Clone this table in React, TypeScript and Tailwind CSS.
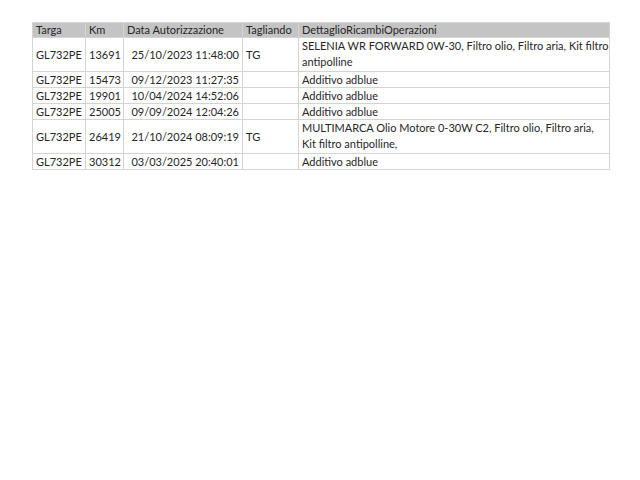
const rows = [
  { targa: "GL732PE", km: "13691", data: "25/10/2023 11:48:00", tg: "TG", det: ["SELENIA WR FORWARD 0W-30, Filtro olio, Filtro aria, Kit filtro", "antipolline"] },
  { targa: "GL732PE", km: "15473", data: "09/12/2023 11:27:35", tg: "", det: ["Additivo adblue"] },
  { targa: "GL732PE", km: "19901", data: "10/04/2024 14:52:06", tg: "", det: ["Additivo adblue"] },
  { targa: "GL732PE", km: "25005", data: "09/09/2024 12:04:26", tg: "", det: ["Additivo adblue"] },
  { targa: "GL732PE", km: "26419", data: "21/10/2024 08:09:19", tg: "TG", det: ["MULTIMARCA Olio Motore 0-30W C2, Filtro olio, Filtro aria,", "Kit filtro antipolline,"] },
  { targa: "GL732PE", km: "30312", data: "03/03/2025 20:40:01", tg: "", det: ["Additivo adblue"] },
];

const cell = "border border-[#d4d4d4] px-[3px] py-0 align-middle whitespace-nowrap";

export default function App() {
  return (
    <div className="w-[640px] h-[480px] bg-white pt-[22px] pl-[32px] text-[#262626] text-[11px]" style={{ fontFamily: "Lato, 'Open Sans', sans-serif" }}>
      <table className="border-collapse table-fixed w-[577px] border border-[#cfcfcf]">
        <colgroup>
          <col className="w-[53px]" />
          <col className="w-[38px]" />
          <col className="w-[119px]" />
          <col className="w-[56px]" />
          <col className="w-[311px]" />
        </colgroup>
        <thead>
          <tr className="h-[14px] bg-[#c4c4c4] leading-[14px]">
            <th className={cell + " text-left font-normal border-[#a8a8a8]"}>Targa</th>
            <th className={cell + " text-left font-normal border-[#a8a8a8]"}>Km</th>
            <th className={cell + " text-left font-normal border-[#a8a8a8]"}>Data Autorizzazione</th>
            <th className={cell + " text-left font-normal border-[#a8a8a8]"}>Tagliando</th>
            <th className={cell + " text-left font-normal border-[#a8a8a8]"}>DettaglioRicambiOperazioni</th>
          </tr>
        </thead>
        <tbody>
          {rows.map((r, i) => {
            const dbl = r.det.length > 1;
            return (
              <tr key={i} className={dbl ? "h-[34px] leading-[16px]" : "h-[16px] leading-[15px]"}>
                <td className={cell}>{r.targa}</td>
                <td className={cell + " text-right"}>{r.km}</td>
                <td className={cell + " text-right"}>{r.data}</td>
                <td className={cell}>{r.tg}</td>
                <td className={cell + " align-top"}>
                  {r.det.map((d, j) => (
                    <div key={j}>{d}</div>
                  ))}
                </td>
              </tr>
            );
          })}
        </tbody>
      </table>
    </div>
  );
}
